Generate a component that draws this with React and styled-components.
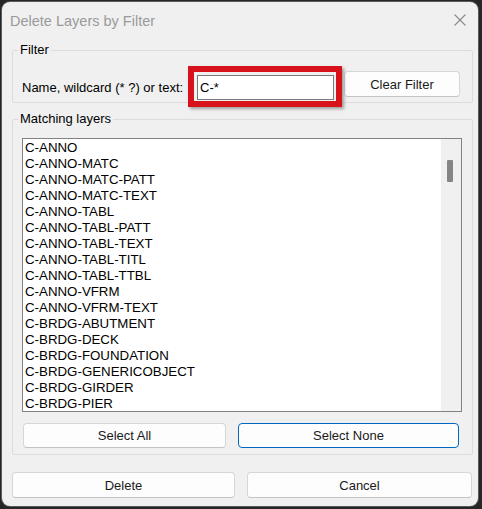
import React from "react"
import styled, { createGlobalStyle } from "styled-components"

const layers = [
    "C-ANNO",
    "C-ANNO-MATC",
    "C-ANNO-MATC-PATT",
    "C-ANNO-MATC-TEXT",
    "C-ANNO-TABL",
    "C-ANNO-TABL-PATT",
    "C-ANNO-TABL-TEXT",
    "C-ANNO-TABL-TITL",
    "C-ANNO-TABL-TTBL",
    "C-ANNO-VFRM",
    "C-ANNO-VFRM-TEXT",
    "C-BRDG-ABUTMENT",
    "C-BRDG-DECK",
    "C-BRDG-FOUNDATION",
    "C-BRDG-GENERICOBJECT",
    "C-BRDG-GIRDER",
    "C-BRDG-PIER",
]

const GlobalStyle = createGlobalStyle`
html, body {
    margin: 0;
    padding: 0;
    background: #262626;
}
body {
    font-family: "Liberation Sans", Arial, sans-serif;
    font-size: 13px;
    color: #000;
}
`

export default function App() {
    return (
        <>
            <GlobalStyle />
            <Desktop>
                <Window>
                    <TitleBar>
                        <Title>Delete Layers by Filter</Title>
                        <CloseIcon width="12" height="12" viewBox="0 0 12 12">
                            <path d="M0.5 0.5 L11.5 11.5 M11.5 0.5 L0.5 11.5" stroke="#8a8a8a" strokeWidth="1.1" fill="none" />
                        </CloseIcon>
                    </TitleBar>

                    <Body>
                        {/* filter box */}
                        <Group $mt={4} $h={61}>
                            <Legend>Filter</Legend>
                            <FilterRow>
                                <FieldLabel>Name, wildcard (* ?) or text:</FieldLabel>
                                <Highlight>
                                    <TextInput defaultValue="C-*" />
                                </Highlight>
                                <ClearButton $w={116} $h={26}>Clear Filter</ClearButton>
                            </FilterRow>
                        </Group>

                        {/* list of matching layers */}
                        <Group $mt={8} $h={344}>
                            <Legend>Matching layers</Legend>
                            <ListBox>
                                <Items>
                                    {layers.map(name => <Item key={name}>{name}</Item>)}
                                </Items>
                                <ScrollTrack>
                                    <ScrollThumb />
                                </ScrollTrack>
                            </ListBox>
                            <SelectRow>
                                <Button $w={203} $h={25}>Select All</Button>
                                <Button $w={221} $h={25} $focused>Select None</Button>
                            </SelectRow>
                        </Group>

                        <Footer>
                            <Button $w={223} $h={26}>Delete</Button>
                            <Button $w={225} $h={26}>Cancel</Button>
                        </Footer>
                    </Body>
                </Window>
            </Desktop>
        </>
    )
}

const Desktop = styled.div`
width: 482px;
height: 509px;
padding: 2px 0 0 2px;
box-sizing: border-box;
`

const Window = styled.div`
width: 476px;
height: 504px;
background: #f0f0f0;
border-radius: 8px;
box-shadow: 0 0 0 1px #5a5a5a;
overflow: hidden;
`

const TitleBar = styled.div`
height: 36px;
display: flex;
align-items: center;
justify-content: space-between;
padding: 0 12px 0 8px;
`

const Title = styled.div`
font-size: 14.5px;
color: #9a9a9a;
padding-top: 1px;
`

const CloseIcon = styled.svg`
display: block;
`

const Body = styled.div`
padding: 0 4px 0 10px;
`

const Group = styled.fieldset`
margin: ${p => p.$mt}px 0 0 0;
padding: 0;
height: ${p => p.$h}px;
width: 461px;
box-sizing: border-box;
border: 1px solid #dcdcdc;
border-radius: 2px;
min-width: 0;
`

const Legend = styled.legend`
margin-left: 5px;
padding: 0 2px;
line-height: 16px;
height: 16px;
font-size: 13px;
color: #000;
`

const FilterRow = styled.div`
display: flex;
align-items: flex-start;
padding: 13px 0 0 9px;
`

const FieldLabel = styled.div`
width: 175px;
flex: none;
margin-top: 9px;
line-height: 16px;
white-space: nowrap;
`

const Highlight = styled.div`
position: relative;
z-index: 1;
margin-top: 4px;
flex: none;
&::after {
    content: "";
    position: absolute;
    top: -9px;
    left: -9px;
    right: -8px;
    bottom: -7px;
    border: 6px solid #d8121b;
    box-shadow: 2px 2px 3px rgba(0, 0, 0, 0.35);
    pointer-events: none;
}
`

const TextInput = styled.input`
display: block;
width: 137px;
height: 25px;
box-sizing: border-box;
margin: 0;
padding: 0 2px;
border: 1px solid #7a7a7a;
background: #fff;
font-family: "Liberation Sans", Arial, sans-serif;
font-size: 13px;
color: #000;
outline: none;
`

const Button = styled.button`
width: ${p => p.$w}px;
height: ${p => p.$h}px;
flex: none;
margin: 0;
padding: 0;
box-sizing: border-box;
background: #fdfdfd;
border: 1px solid ${p => (p.$focused ? "#0067c0" : "#d6d6d6")};
border-bottom-color: ${p => (p.$focused ? "#0067c0" : "#c4c4c4")};
border-radius: 4px;
font-family: "Liberation Sans", Arial, sans-serif;
font-size: 13px;
color: #1a1a1a;
`

const ClearButton = styled(Button)`
margin-left: 10px;
`

const ListBox = styled.div`
display: flex;
margin: 11px 0 0 9px;
width: 440px;
height: 274px;
box-sizing: border-box;
border: 1px solid #828282;
background: #fff;
overflow: hidden;
`

const Items = styled.div`
flex: 1;
padding: 1px 0 0 2px;
overflow: hidden;
`

const Item = styled.div`
height: 16px;
line-height: 16px;
font-size: 13.3px;
white-space: nowrap;
`

const ScrollTrack = styled.div`
width: 20px;
flex: none;
background: #f0f0f0;
`

const ScrollThumb = styled.div`
width: 6px;
height: 22px;
margin: 21px 0 0 6px;
background: #858585;
border-radius: 1px;
`

const SelectRow = styled.div`
display: flex;
gap: 12px;
margin: 11px 0 0 10px;
`

const Footer = styled.div`
display: flex;
gap: 12px;
margin-top: 17px;
`
